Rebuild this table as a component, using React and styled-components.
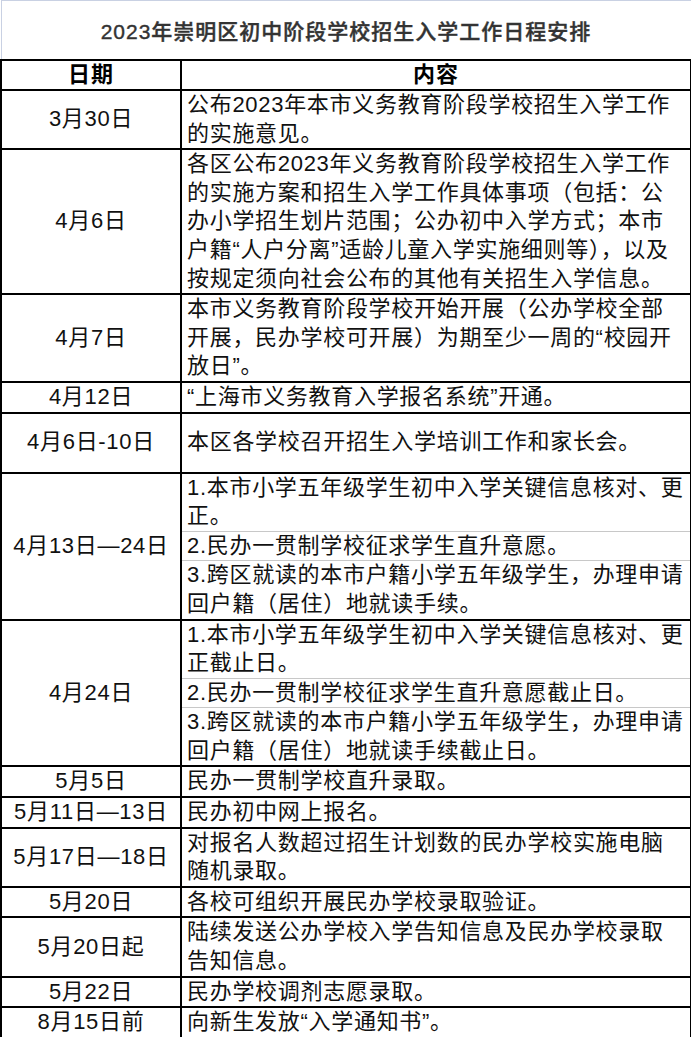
import React from 'react';
import styled, { createGlobalStyle } from 'styled-components';

const GlobalStyle = createGlobalStyle`
  body {
    margin: 0;
    background: #ffffff;
  }
`;

const Sheet = styled.table`
  width: 690px;
  border-collapse: collapse;
  table-layout: fixed;
  font-family: "Liberation Sans", "Noto Sans CJK SC", sans-serif;
  color: #111111;
`;

const TitleCell = styled.td`
  height: 58px;
  padding: 0;
  text-align: center;
  vertical-align: middle;
  font-size: 21px;
  font-weight: 500;
  letter-spacing: 1px;
  color: #333333;
  -webkit-text-stroke: 0.4px #333333;
  border: 1px solid #c9d1e3;
  border-bottom: 2px solid #000000;
`;

const HeadCell = styled.th`
  height: 28px;
  padding: 0;
  line-height: 28px;
  font-size: 22px;
  font-weight: bold;
  letter-spacing: 1px;
  color: #000000;
  text-align: center;
  border: 2px solid #000000;
`;

const DateCell = styled.td`
  padding: 0;
  text-align: center;
  vertical-align: middle;
  font-size: 22px;
  letter-spacing: 0.7px;
  line-height: 28.6px;
  white-space: nowrap;
  border: 2px solid #000000;
`;

const ContentCell = styled.td`
  height: ${(p) => (p.$tall ? '58px' : 'auto')};
  padding: 0 0 0 5px;
  text-align: left;
  vertical-align: ${(p) => (p.$tall ? 'middle' : 'top')};
  font-size: 22px;
  letter-spacing: 0.7px;
  line-height: 28.6px;
  white-space: nowrap;
  border-left: 2px solid #000000;
  border-right: 2px solid #000000;
  border-top: ${(p) => (p.$first ? '2px solid #000000' : '1px solid #c8c8c8')};
  border-bottom: ${(p) => (p.$last ? '2px solid #000000' : '1px solid #c8c8c8')};
`;

const Line = styled.div`
  display: block;
`;

const schedule = [
  { date: '3月30日', items: [['公布2023年本市义务教育阶段学校招生入学工作', '的实施意见。']] },
  {
    date: '4月6日',
    items: [[
      '各区公布2023年义务教育阶段学校招生入学工作',
      '的实施方案和招生入学工作具体事项（包括：公',
      '办小学招生划片范围；公办初中入学方式；本市',
      '户籍“人户分离”适龄儿童入学实施细则等），以及',
      '按规定须向社会公布的其他有关招生入学信息。',
    ]],
  },
  {
    date: '4月7日',
    items: [[
      '本市义务教育阶段学校开始开展（公办学校全部',
      '开展，民办学校可开展）为期至少一周的“校园开',
      '放日”。',
    ]],
  },
  { date: '4月12日', items: [['“上海市义务教育入学报名系统”开通。']] },
  { date: '4月6日-10日', tall: true, items: [['本区各学校召开招生入学培训工作和家长会。']] },
  {
    date: '4月13日—24日',
    items: [
      ['1.本市小学五年级学生初中入学关键信息核对、更', '正。'],
      ['2.民办一贯制学校征求学生直升意愿。'],
      ['3.跨区就读的本市户籍小学五年级学生，办理申请', '回户籍（居住）地就读手续。'],
    ],
  },
  {
    date: '4月24日',
    items: [
      ['1.本市小学五年级学生初中入学关键信息核对、更', '正截止日。'],
      ['2.民办一贯制学校征求学生直升意愿截止日。'],
      ['3.跨区就读的本市户籍小学五年级学生，办理申请', '回户籍（居住）地就读手续截止日。'],
    ],
  },
  { date: '5月5日', items: [['民办一贯制学校直升录取。']] },
  { date: '5月11日—13日', items: [['民办初中网上报名。']] },
  { date: '5月17日—18日', items: [['对报名人数超过招生计划数的民办学校实施电脑', '随机录取。']] },
  { date: '5月20日', items: [['各校可组织开展民办学校录取验证。']] },
  { date: '5月20日起', items: [['陆续发送公办学校入学告知信息及民办学校录取', '告知信息。']] },
  { date: '5月22日', items: [['民办学校调剂志愿录取。']] },
  { date: '8月15日前', items: [['向新生发放“入学通知书”。']] },
];

function ScheduleRows({ entry }) {
  const { date, items, tall } = entry;
  return items.map((lines, i) => (
    <tr key={`${date}-${i}`}>
      {i === 0 && <DateCell rowSpan={items.length}>{date}</DateCell>}
      <ContentCell $first={i === 0} $last={i === items.length - 1} $tall={tall}>
        {lines.map((text) => (
          <Line key={text}>{text}</Line>
        ))}
      </ContentCell>
    </tr>
  ));
}

export default function App() {
  return (
    <>
      <GlobalStyle />
      <Sheet>
        <colgroup>
          <col style={{ width: '180px' }} />
          <col style={{ width: '510px' }} />
        </colgroup>
        <tbody>
          <tr>
            <TitleCell colSpan={2}>2023年崇明区初中阶段学校招生入学工作日程安排</TitleCell>
          </tr>
          <tr>
            <HeadCell>日期</HeadCell>
            <HeadCell>内容</HeadCell>
          </tr>
          {schedule.map((entry) => (
            <ScheduleRows key={entry.date} entry={entry} />
          ))}
        </tbody>
      </Sheet>
    </>
  );
}
